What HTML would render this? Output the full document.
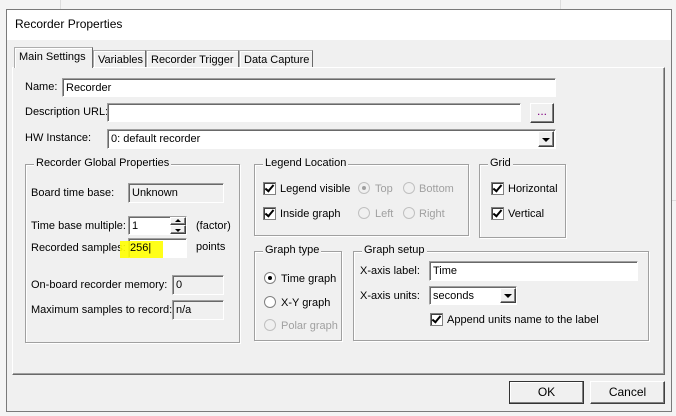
<!DOCTYPE html>
<html><head><style>
*{box-sizing:border-box}
body{margin:0;width:676px;height:416px;background:#f4f4f4;font:11px "Liberation Sans",sans-serif;color:#000;position:relative;overflow:hidden}
.a{position:absolute}
.dlg{left:6px;top:9px;width:666px;height:403px;background:#f0f0f0;border:1px solid #7a7a7a}
.title{left:7px;top:10px;width:664px;height:30px;background:#fff}
.tab{position:absolute;border:1px solid #adadad;border-bottom:none;background:#f0f0f0;padding:3px 4px;white-space:nowrap;box-shadow:inset 1px 1px 0 #fff;border-right-color:#696969}
.panel{left:12px;top:67px;width:653px;height:308px;border:1px solid #fff;border-right-color:#696969;border-bottom-color:#696969;box-shadow:inset -1px -1px 0 #a0a0a0}
.in{position:absolute;background:#fff;border:1px solid #a0a0a0;border-right-color:#fff;border-bottom-color:#fff;box-shadow:inset 1px 1px 0 #696969;padding:3px 3px;line-height:13px;white-space:nowrap}
.ro{background:#f0f0f0}
.grp{position:absolute;border:1px solid #a0a0a0;box-shadow:1px 1px 0 #fff,inset 1px 1px 0 #fff}
.grp>span{position:absolute;top:-8px;left:8px;background:#f0f0f0;padding:0 2px}
.l{position:absolute;white-space:nowrap}
.cb{position:absolute;width:13px;height:13px;background:#fff;border:1px solid #808080;box-shadow:inset 1px 1px 0 #404040}
.cb:after{content:"";position:absolute;left:3px;top:0px;width:3px;height:7px;border:solid #000;border-width:0 2px 2px 0;transform:rotate(40deg)}
.rb{position:absolute;width:12px;height:12px;border-radius:50%;background:#fff;border:1px solid #808080}
.rb.dis{background:#f0f0f0;border-color:#c0c0c0}
.rb.on:after{content:"";position:absolute;left:3px;top:3px;width:4px;height:4px;border-radius:50%;background:#000}
.rb.dis.on:after{background:#a0a0a0}
.g{color:#a0a0a0}
.btn{position:absolute;background:#f0f0f0;border:1px solid #fff;border-right-color:#404040;border-bottom-color:#404040;box-shadow:inset -1px -1px 0 #808080;text-align:center;line-height:20px;font-size:12px}
.arr{position:absolute;width:0;height:0;border-left:4px solid transparent;border-right:4px solid transparent;border-top:4px solid #000}
</style></head><body>
<div class="a" style="left:60px;top:0;width:1px;height:9px;background:#ddd"></div>
<div class="a" style="left:560px;top:0;width:1px;height:9px;background:#ddd"></div>
<div class="a" style="left:672px;top:200px;width:4px;height:1px;background:#ddd"></div>
<div class="a dlg"></div>
<div class="a title"></div>
<div class="l" style="left:15px;top:17px;font-size:12px">Recorder Properties</div>

<div class="a panel"></div>
<div class="tab" style="left:93px;top:50px;height:17px;width:53px">Variables</div>
<div class="tab" style="left:146px;top:50px;height:17px;width:93px">Recorder Trigger</div>
<div class="tab" style="left:239px;top:50px;height:17px;width:74px">Data Capture</div>
<div class="tab" style="left:14px;top:47px;height:21px;width:79px;border-bottom:none">Main Settings</div>

<div class="l" style="left:25px;top:81px">Name:</div>
<div class="in" style="left:62px;top:78px;width:494px;height:19px">Recorder</div>
<div class="l" style="left:25px;top:106px">Description URL:</div>
<div class="in" style="left:107px;top:103px;width:414px;height:19px"></div>
<div class="btn" style="left:530px;top:103px;width:24px;height:20px;line-height:14px;color:#800080">...</div>
<div class="l" style="left:25px;top:132px">HW Instance:</div>
<div class="in" style="left:107px;top:129px;width:449px;height:20px">0: default recorder</div>
<div class="btn" style="left:538px;top:131px;width:16px;height:16px"></div>
<div class="arr" style="left:542px;top:138px"></div>

<div class="grp" style="left:25px;top:164px;width:215px;height:179px"><span>Recorder Global Properties</span></div>
<div class="l" style="left:31px;top:187px">Board time base:</div>
<div class="in ro" style="left:128px;top:183px;width:96px;height:20px">Unknown</div>
<div class="l" style="left:31px;top:220px">Time base multiple:</div>
<div class="in" style="left:128px;top:216px;width:59px;height:19px">1</div>
<div class="btn" style="left:170px;top:217px;width:16px;height:8px"></div>
<div class="btn" style="left:170px;top:225px;width:16px;height:9px"></div>
<div class="arr" style="left:175px;top:219px;border-top:none;border-bottom:3px solid #000;border-left-width:3px;border-right-width:3px"></div>
<div class="arr" style="left:175px;top:229px;border-top-width:3px;border-left-width:3px;border-right-width:3px"></div>
<div class="l" style="left:196px;top:220px">(factor)</div>
<div class="l" style="left:31px;top:242px">Recorded samples:</div>
<div class="in" style="left:128px;top:238px;width:59px;height:20px"></div>
<div class="a" style="left:120px;top:241px;width:43px;height:17px;background:rgba(255,255,0,.9)"></div>
<div class="l" style="left:130px;top:242px">256|</div>
<div class="l" style="left:196px;top:241px">points</div>
<div class="l" style="left:31px;top:279px">On-board recorder memory:</div>
<div class="in ro" style="left:172px;top:275px;width:52px;height:20px">0</div>
<div class="l" style="left:31px;top:304px">Maximum samples to record:</div>
<div class="in ro" style="left:172px;top:300px;width:52px;height:20px">n/a</div>

<div class="grp" style="left:254px;top:164px;width:215px;height:72px"><span>Legend Location</span></div>
<div class="cb" style="left:263px;top:182px"></div><div class="l" style="left:280px;top:183px">Legend visible</div>
<div class="rb dis on" style="left:358px;top:182px"></div><div class="l g" style="left:375px;top:183px">Top</div>
<div class="rb dis" style="left:403px;top:182px"></div><div class="l g" style="left:419px;top:183px">Bottom</div>
<div class="cb" style="left:263px;top:207px"></div><div class="l" style="left:280px;top:208px">Inside graph</div>
<div class="rb dis" style="left:358px;top:207px"></div><div class="l g" style="left:375px;top:208px">Left</div>
<div class="rb dis" style="left:403px;top:207px"></div><div class="l g" style="left:419px;top:208px">Right</div>

<div class="grp" style="left:479px;top:164px;width:87px;height:74px"><span>Grid</span></div>
<div class="cb" style="left:491px;top:182px"></div><div class="l" style="left:508px;top:183px">Horizontal</div>
<div class="cb" style="left:491px;top:207px"></div><div class="l" style="left:508px;top:208px">Vertical</div>

<div class="grp" style="left:254px;top:251px;width:88px;height:90px"><span>Graph type</span></div>
<div class="rb on" style="left:264px;top:272px"></div><div class="l" style="left:281px;top:273px">Time graph</div>
<div class="rb" style="left:264px;top:296px"></div><div class="l" style="left:281px;top:297px">X-Y graph</div>
<div class="rb dis" style="left:264px;top:319px"></div><div class="l g" style="left:281px;top:320px">Polar graph</div>

<div class="grp" style="left:353px;top:251px;width:296px;height:90px"><span>Graph setup</span></div>
<div class="l" style="left:360px;top:265px">X-axis label:</div>
<div class="in" style="left:429px;top:261px;width:209px;height:20px">Time</div>
<div class="l" style="left:360px;top:290px">X-axis units:</div>
<div class="in" style="left:429px;top:286px;width:88px;height:19px">seconds</div>
<div class="btn" style="left:500px;top:288px;width:16px;height:15px"></div>
<div class="arr" style="left:504px;top:294px"></div>
<div class="cb" style="left:430px;top:313px"></div><div class="l" style="left:447px;top:314px">Append units name to the label</div>

<div class="btn" style="left:509px;top:381px;width:75px;height:23px;border:1px solid #333;box-shadow:inset -1px -1px 0 #808080,inset 1px 1px 0 #fff">OK</div>
<div class="btn" style="left:590px;top:381px;width:75px;height:23px">Cancel</div>
</body></html>
